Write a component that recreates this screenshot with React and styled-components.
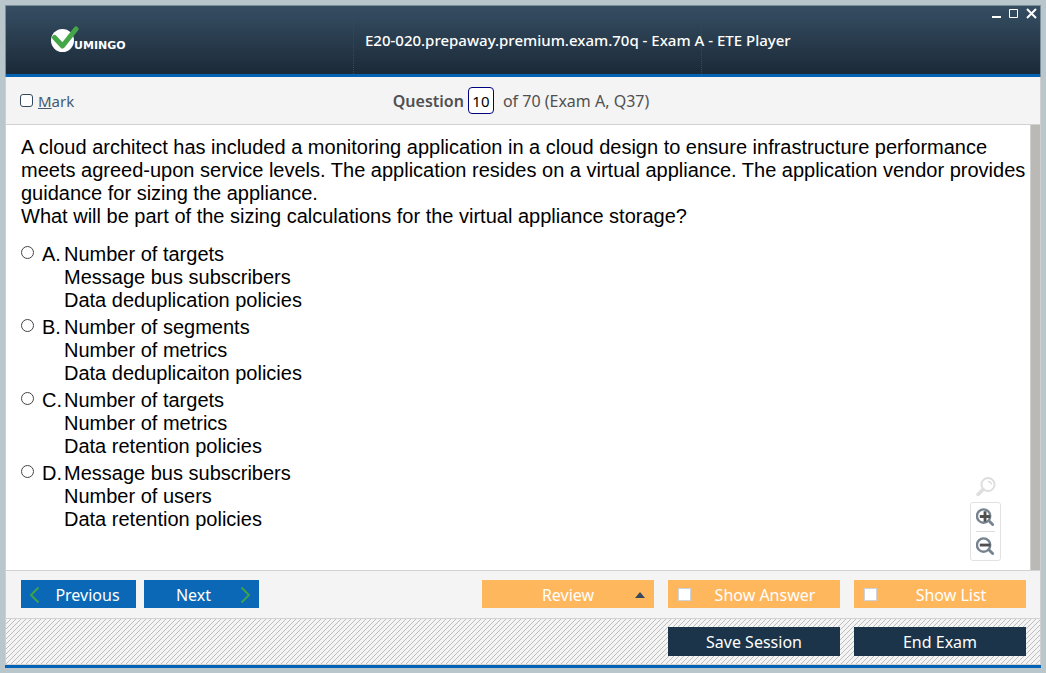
import React from "react";
import styled, { createGlobalStyle } from "styled-components";

const ui = `"Noto Sans", "Open Sans", sans-serif`;

const Global = createGlobalStyle`
  *, *::before, *::after { box-sizing: border-box; }
  body { margin: 0; background: #b9c6cc; }
  button, input, select { font: inherit; margin: 0; }
`;

const Frame = styled.div`
  min-height: 100vh;
  padding: 5px;
  display: flex;
  flex-direction: column;
  font-family: ${ui};
  background: #b9c6cc;
`;

const Header = styled.header`
  display: grid;
  grid-template-columns: minmax(0, 35fr) minmax(0, 35fr) minmax(0, 34fr);
  height: 72px;
  padding-bottom: 3px;
  border: 1px solid #7b8f98;
  border-width: 1px 1px 0;
  background: linear-gradient(#364e63, #1a2836);
  box-shadow: inset 0 -3px #0463b5;
`;

const HeaderCell = styled.div`
  display: flex;
  align-items: center;
  justify-content: ${(p) => p.$justify || "flex-start"};
  padding: ${(p) => p.$pad || "0"};
  border-right: ${(p) => (p.$rule ? "1px dotted #2f3fa0" : "0")};
  white-space: nowrap;
`;

const Title = styled.h1`
  margin: 0;
  font-size: 15px;
  line-height: 20px;
  font-weight: 500;
  color: #fff;
`;

const WindowControls = styled.div`
  display: flex;
  gap: 6px;
  align-self: flex-start;
`;

const WindowButton = styled.button`
  display: flex;
  width: 12px;
  height: 12px;
  padding: 0;
  border: 0;
  background: none;
`;

const Body = styled.main`
  flex: 1;
  display: flex;
  flex-direction: column;
  border: 1px solid #cfcfcf;
  border-width: 0 1px;
  background: #f4f4f4;
`;

const InfoBar = styled.div`
  display: grid;
  grid-template-columns: 1fr auto 1fr;
  align-items: center;
  height: 48px;
  padding: 0 18px 0 14px;
  border-bottom: 1px solid #d2d2d2;
  font-size: 16px;
  line-height: 22px;
  color: #505050;
`;

const MarkLabel = styled.label`
  display: flex;
  align-items: center;
  gap: 5px;
  font-size: 15px;
  color: #435a70;
`;

const MarkBox = styled.input`
  appearance: none;
  width: 13px;
  height: 13px;
  border: 1px solid #34495e;
  border-radius: 3px;
  background: #fff;
`;

const Counter = styled.div`
  display: flex;
  align-items: center;
  white-space: pre;
`;

const CounterName = styled.span`
  font-weight: 600;
`;

const NumberBox = styled.input`
  width: 26px;
  height: 27px;
  margin: 0 9px 0 4px;
  padding: 0;
  border: 1px solid #000080;
  border-radius: 4px;
  background: #fff;
  color: #000;
  font-size: 15px;
  text-align: center;
`;

const Content = styled.section`
  flex: 1;
  display: flex;
  position: relative;
  background: #fff;
  border-bottom: 1px solid #d2d2d2;
  font-family: "Liberation Sans", Arial, sans-serif;
  font-size: 20px;
  line-height: 23px;
  color: #000;
`;

const Question = styled.div`
  flex: 1;
  padding: 11px 2px 11px 15px;
`;

const Prompt = styled.p`
  margin: 0 0 15px;
`;

const Options = styled.div`
  display: flex;
  flex-direction: column;
  gap: 4px;
`;

const Option = styled.label`
  display: grid;
  grid-template-columns: 21px 22px 1fr;
  align-items: start;
`;

const Radio = styled.input`
  appearance: none;
  width: 13px;
  height: 13px;
  margin-top: 3px;
  border: 1px solid #444;
  border-radius: 50%;
  background: #fff;
`;

const OptionText = styled.span`
  white-space: pre-line;
`;

const ScrollTrack = styled.div`
  width: 10px;
  background: #bab9b5;
  border-left: 1px solid #d0d0d0;
`;

const ZoomTools = styled.div`
  position: absolute;
  right: 39px;
  bottom: 9px;
  display: flex;
  flex-direction: column;
  align-items: center;
  gap: 4px;
`;

const ZoomPanel = styled.div`
  display: flex;
  flex-direction: column;
  width: 31px;
  padding: 0 5px;
  border: 1px solid #e2e2e2;
  border-radius: 3px;
`;

const ZoomButton = styled.button`
  display: flex;
  justify-content: center;
  align-items: center;
  width: 100%;
  height: ${(p) => (p.$divided ? "29px" : "28px")};
  padding: 0;
  border: 0;
  border-top: ${(p) => (p.$divided ? "1px solid #dcdcdc" : "0")};
  background: none;
`;

const ResetButton = styled(ZoomButton)`
  height: 22px;
`;

const ActionBar = styled.div`
  display: flex;
  gap: 14px;
  align-items: center;
  height: 48px;
  padding: 0 14px 2px 15px;
  border-bottom: 1px solid #d2d2d2;
`;

const NavGroup = styled.div`
  display: flex;
  gap: 8px;
  margin-right: auto;
`;

const SessionBar = styled(ActionBar)`
  justify-content: flex-end;
  height: 46px;
  padding-bottom: 0;
  background: #f4f4f4 url("data:image/svg+xml,%3Csvg xmlns='http://www.w3.org/2000/svg' width='5' height='5' shape-rendering='crispEdges'%3E%3Cpath fill='%23bdbdbd' d='M4 0h1v1H4zM3 1h1v1H3zM2 2h1v1H2zM1 3h1v1H1zM0 4h1v1H0z'/%3E%3C/svg%3E");
`;

const tones = {
  blue: "#0a68b6",
  orange: "#ffb75d",
  navy: "#1b344a",
};

const Action = styled.button`
  display: grid;
  grid-template-columns: ${(p) => p.$columns || "1fr"};
  align-items: center;
  justify-items: center;
  width: ${(p) => (p.$tone === "blue" ? "115px" : "172px")};
  height: ${(p) => (p.$tone === "navy" ? "29px" : "28px")};
  padding: ${(p) => (p.$tone === "navy" ? "0 8px" : "2px 8px 0")};
  border: 0;
  background: ${(p) => tones[p.$tone]};
  color: #fff;
  font-size: 16px;
  line-height: 22px;
  white-space: nowrap;
`;

const ToggleAction = styled(Action)`
  grid-template-columns: 22px 1fr;
  padding: 2px 10px 0;
`;

const ToggleBox = styled.input`
  appearance: none;
  justify-self: start;
  width: 13px;
  height: 13px;
  border: 1px solid #cfd3d8;
  background: #fff;
`;

const ReviewText = styled.span`
  grid-column: 2;
`;

const ChevronMark = styled.svg`
  justify-self: ${(p) => p.$side};
`;

const Base = styled.div`
  height: 3px;
  background: #0463b5;
`;

function Logo() {
  return (
    <svg width="84" height="28" viewBox="0 0 84 28" role="img" aria-label="Vumingo">
      <circle cx="11.500" cy="14.500" r="11.500" fill="#fff" />
      <path d="M3.500 11.500l8 8.500L25 3" fill="none" stroke="#45a648" strokeWidth="5" strokeLinecap="round" strokeLinejoin="round" />
      <text x="23" y="23" fill="#fff" fontFamily="DejaVu Sans, sans-serif" fontWeight="700" fontSize="11">UMINGO</text>
    </svg>
  );
}

function Chevron({ d, side }) {
  return (
    <ChevronMark $side={side} width="12" height="18" viewBox="0 0 12 18">
      <path d={d} fill="none" stroke="#3fa24b" strokeWidth="2" />
    </ChevronMark>
  );
}

function ZoomIcon({ sign }) {
  return (
    <svg width="20" height="20" viewBox="0 0 20 20" fill="none">
      <circle cx="8" cy="9" r="7" stroke="#75838f" strokeWidth="2.500" />
      <path d="M13.500 14l4 4" stroke="#75838f" strokeWidth="3" strokeLinecap="round" />
      <path d={sign} stroke="#505050" strokeWidth="3" />
    </svg>
  );
}

const options = [
  ["A", "Number of targets\nMessage bus subscribers\nData deduplication policies"],
  ["B", "Number of segments\nNumber of metrics\nData deduplicaiton policies"],
  ["C", "Number of targets\nNumber of metrics\nData retention policies"],
  ["D", "Message bus subscribers\nNumber of users\nData retention policies"],
];

export default function App() {
  return (
    <Frame>
      <Global />
      <Header>
        <HeaderCell $rule $pad="0 0 0 45px"><Logo /></HeaderCell>
        <HeaderCell $rule $pad="0 0 0 11px"><Title>E20-020.prepaway.premium.exam.70q - Exam A - ETE Player</Title></HeaderCell>
        <HeaderCell $justify="flex-end" $pad="2px 2px 0 0">
          <WindowControls>
            <WindowButton aria-label="Minimize"><svg width="12" height="12"><path d="M2 9h9" stroke="#fff" strokeWidth="2" /></svg></WindowButton>
            <WindowButton aria-label="Maximize"><svg width="12" height="12"><path d="M1.500 1.500h8v8h-8z" fill="none" stroke="#fff" /></svg></WindowButton>
            <WindowButton aria-label="Close"><svg width="12" height="12"><path d="M1 1l9 9M10 1l-9 9" stroke="#fff" strokeWidth="2" /></svg></WindowButton>
          </WindowControls>
        </HeaderCell>
      </Header>
      <Body>
        <InfoBar>
          <MarkLabel><MarkBox type="checkbox" /><span><u>M</u>ark</span></MarkLabel>
          <Counter>
            <CounterName>Question</CounterName>
            <NumberBox aria-label="Question number" defaultValue="10" />
            <span>of 70 (Exam A, Q37)</span>
          </Counter>
        </InfoBar>
        <Content>
          <Question>
            <Prompt>
              A cloud architect has included a monitoring application in a cloud design to ensure infrastructure performance meets agreed-upon service levels. The application resides on a virtual appliance. The application vendor provides guidance for sizing the appliance.
              <br />
              What will be part of the sizing calculations for the virtual appliance storage?
            </Prompt>
            <Options>
              {options.map(([key, text]) => (
                <Option key={key}>
                  <Radio type="radio" name="answer" />
                  <span>{key}.</span>
                  <OptionText>{text}</OptionText>
                </Option>
              ))}
            </Options>
          </Question>
          <ZoomTools>
            <ResetButton aria-label="Reset zoom">
              <svg width="20" height="20" viewBox="0 0 20 20" fill="none" stroke="#dedede">
                <circle cx="12" cy="7.500" r="6.500" strokeWidth="2" />
                <path d="M7 12.500l-5 5" strokeWidth="3.500" strokeLinecap="round" />
                <path d="M12 4.500q3 0 3.500 3" strokeWidth="1.500" />
              </svg>
            </ResetButton>
            <ZoomPanel>
              <ZoomButton aria-label="Zoom in"><ZoomIcon sign="M4 9.500h11M9.500 4v11" /></ZoomButton>
              <ZoomButton $divided aria-label="Zoom out"><ZoomIcon sign="M4 9h11" /></ZoomButton>
            </ZoomPanel>
          </ZoomTools>
          <ScrollTrack />
        </Content>
        <ActionBar>
          <NavGroup>
            <Action $tone="blue" $columns="18px 1fr"><Chevron side="start" d="M9.500 1.500L2 9l7.500 7.500" /><span>Previous</span></Action>
            <Action $tone="blue" $columns="1fr 16px"><span>Next</span><Chevron side="end" d="M2.500 1.500L10 9l-7.500 7.500" /></Action>
          </NavGroup>
          <Action $tone="orange" $columns="12px 1fr 12px">
            <ReviewText>Review</ReviewText>
            <svg width="10" height="6"><path d="M0 6l5-6 5 6z" fill="#34495e" /></svg>
          </Action>
          <ToggleAction as="label" $tone="orange"><ToggleBox type="checkbox" /><span>Show Answer</span></ToggleAction>
          <ToggleAction as="label" $tone="orange"><ToggleBox type="checkbox" /><span>Show List</span></ToggleAction>
        </ActionBar>
        <SessionBar>
          <Action $tone="navy">Save Session</Action>
          <Action $tone="navy">End Exam</Action>
        </SessionBar>
      </Body>
      <Base />
    </Frame>
  );
}
